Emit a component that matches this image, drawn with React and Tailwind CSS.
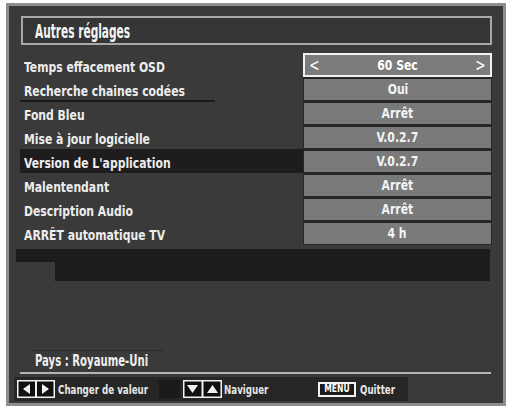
import React from "react";

const rows = [
  { label: "Temps effacement OSD", value: "60 Sec" },
  { label: "Recherche chaines codées", value: "Oui" },
  { label: "Fond Bleu", value: "Arrêt" },
  { label: "Mise à jour logicielle", value: "V.0.2.7" },
  { label: "Version de L'application", value: "V.0.2.7" },
  { label: "Malentendant", value: "Arrêt" },
  { label: "Description Audio", value: "Arrêt" },
  { label: "ARRÊT automatique TV", value: "4 h" },
];

function LeftRightKey() {
  return (
    <svg width="38" height="18" viewBox="0 0 38 18" className="block">
      <rect x="0.75" y="0.75" width="36.5" height="16.5" fill="#111" stroke="#f2f2f2" strokeWidth="1.5" />
      <rect x="18" y="1" width="2" height="16" fill="#f2f2f2" />
      <polygon points="13,4 13,14 6,9" fill="#f2f2f2" />
      <polygon points="25,4 25,14 32,9" fill="#f2f2f2" />
    </svg>
  );
}

function DownUpKey() {
  return (
    <svg width="39" height="18" viewBox="0 0 39 18" className="block">
      <rect x="0.75" y="0.75" width="37.5" height="16.5" fill="#111" stroke="#f2f2f2" strokeWidth="1.5" />
      <rect x="18.5" y="1" width="2" height="16" fill="#f2f2f2" />
      <polygon points="4,5 15,5 9.5,13" fill="#f2f2f2" />
      <polygon points="24,13 35,13 29.5,5" fill="#f2f2f2" />
    </svg>
  );
}

export default function App() {
  const font = "font-['DejaVu_Sans_Condensed','DejaVu_Sans',sans-serif]";
  return (
    <div className={`w-[510px] h-[409px] bg-white pt-[3px] pl-[6px] ${font}`}>
      <div className="w-[500px] h-[403px] border-[3px] border-[#8e8e8e] bg-[#3a3a3a] flex flex-col">
        {/* Title */}
        <div className="mt-[10px] ml-[12px] w-[471px] h-[29px] border-2 border-[#a8a8a8] bg-[#353535] flex items-center pl-[12px]">
          <span className="text-[19px] font-bold text-[#f4f4f4] origin-left scale-x-[0.62] whitespace-nowrap leading-none pt-[1px]">
            Autres réglages
          </span>
        </div>

        {/* Rows */}
        <div className="mt-[8px] flex flex-col">
          {rows.map((r, i) => (
            <div key={i} className="flex h-[24px]">
              <div
                className={`relative ml-[11px] w-[283px] flex items-center pl-[4px] pt-[3px] ${
                  i === 4 ? "bg-[#1e1c1d]" : ""
                }`}
              >
                <span className="text-[14px] font-bold text-[#ededed] origin-left scale-x-[0.86] whitespace-nowrap leading-none">
                  {r.label}
                </span>
                {i === 1 && (
                  <div className="absolute left-0 bottom-[-1px] w-[195px] h-[2px] bg-[#1a1a1a]" />
                )}
              </div>
              <div className="w-[189px] bg-[#262626] flex flex-col justify-center">
                {i === 0 ? (
                  <div className="h-[24px] border-2 border-[#f2f2f2] bg-[#7c7c7c] flex items-center justify-between px-[3px]">
                    <span className="text-[17px] text-white leading-none scale-x-[0.8]">&lt;</span>
                    <span className="text-[14px] font-bold text-white leading-none scale-x-[0.86]">{r.value}</span>
                    <span className="text-[17px] text-white leading-none scale-x-[0.8]">&gt;</span>
                  </div>
                ) : (
                  <div className="h-[21px] mx-[1px] bg-[#7a7a7a] flex items-center justify-center">
                    <span className="text-[14px] font-bold text-[#f4f4f4] leading-none scale-x-[0.86]">{r.value}</span>
                  </div>
                )}
              </div>
            </div>
          ))}
        </div>

        {/* Black region */}
        <div className="mt-[4px] flex flex-col">
          <div className="ml-[7px] w-[474px] h-[13px] bg-[#1d1b1c]" />
          <div className="ml-[46px] w-[435px] h-[19px] bg-[#1d1b1c]" />
        </div>

        {/* Spacer */}
        <div className="flex-1" />

        {/* Pays */}
        <div className="ml-[23px] w-[131px] h-[1px] bg-[#2a2a2a]" />
        <div className="h-[21px] flex items-center pl-[26px]">
          <span className="text-[15px] font-bold text-[#efefef] origin-left scale-x-[0.75] whitespace-nowrap leading-none">
            Pays : Royaume-Uni
          </span>
        </div>
        <div className="ml-[11px] w-[471px] h-[2px] bg-[#b4b4b4]" />

        {/* Bottom bar */}
        <div className="mt-[3px] mb-[2px] ml-[5px] w-[394px] h-[24px] bg-[#262626] flex items-center">
          <div className="ml-[3px]">
            <LeftRightKey />
          </div>
          <div className="ml-[3px] w-[101px] whitespace-nowrap leading-none">
            <span className="inline-block text-[11.5px] font-bold text-[#e6e6e6] origin-left scale-x-[0.84]">
              Changer de valeur
            </span>
          </div>
          <div className="w-[21px] h-[18px] bg-[#1a1a1a]" />
          <div className="ml-[3px]">
            <DownUpKey />
          </div>
          <div className="ml-[2px] w-[94px] whitespace-nowrap leading-none">
            <span className="inline-block text-[11.5px] font-bold text-[#e6e6e6] origin-left scale-x-[0.84]">
              Naviguer
            </span>
          </div>
          <div className="w-[38px] h-[15px] border-2 border-[#f2f2f2] bg-[#1a1a1a] flex items-center justify-center">
            <span className="text-[10px] font-bold text-white leading-none scale-x-[0.85]">MENU</span>
          </div>
          <div className="ml-[4px] whitespace-nowrap leading-none">
            <span className="inline-block text-[11.5px] font-bold text-[#e6e6e6] origin-left scale-x-[0.84]">
              Quitter
            </span>
          </div>
        </div>
      </div>
    </div>
  );
}
